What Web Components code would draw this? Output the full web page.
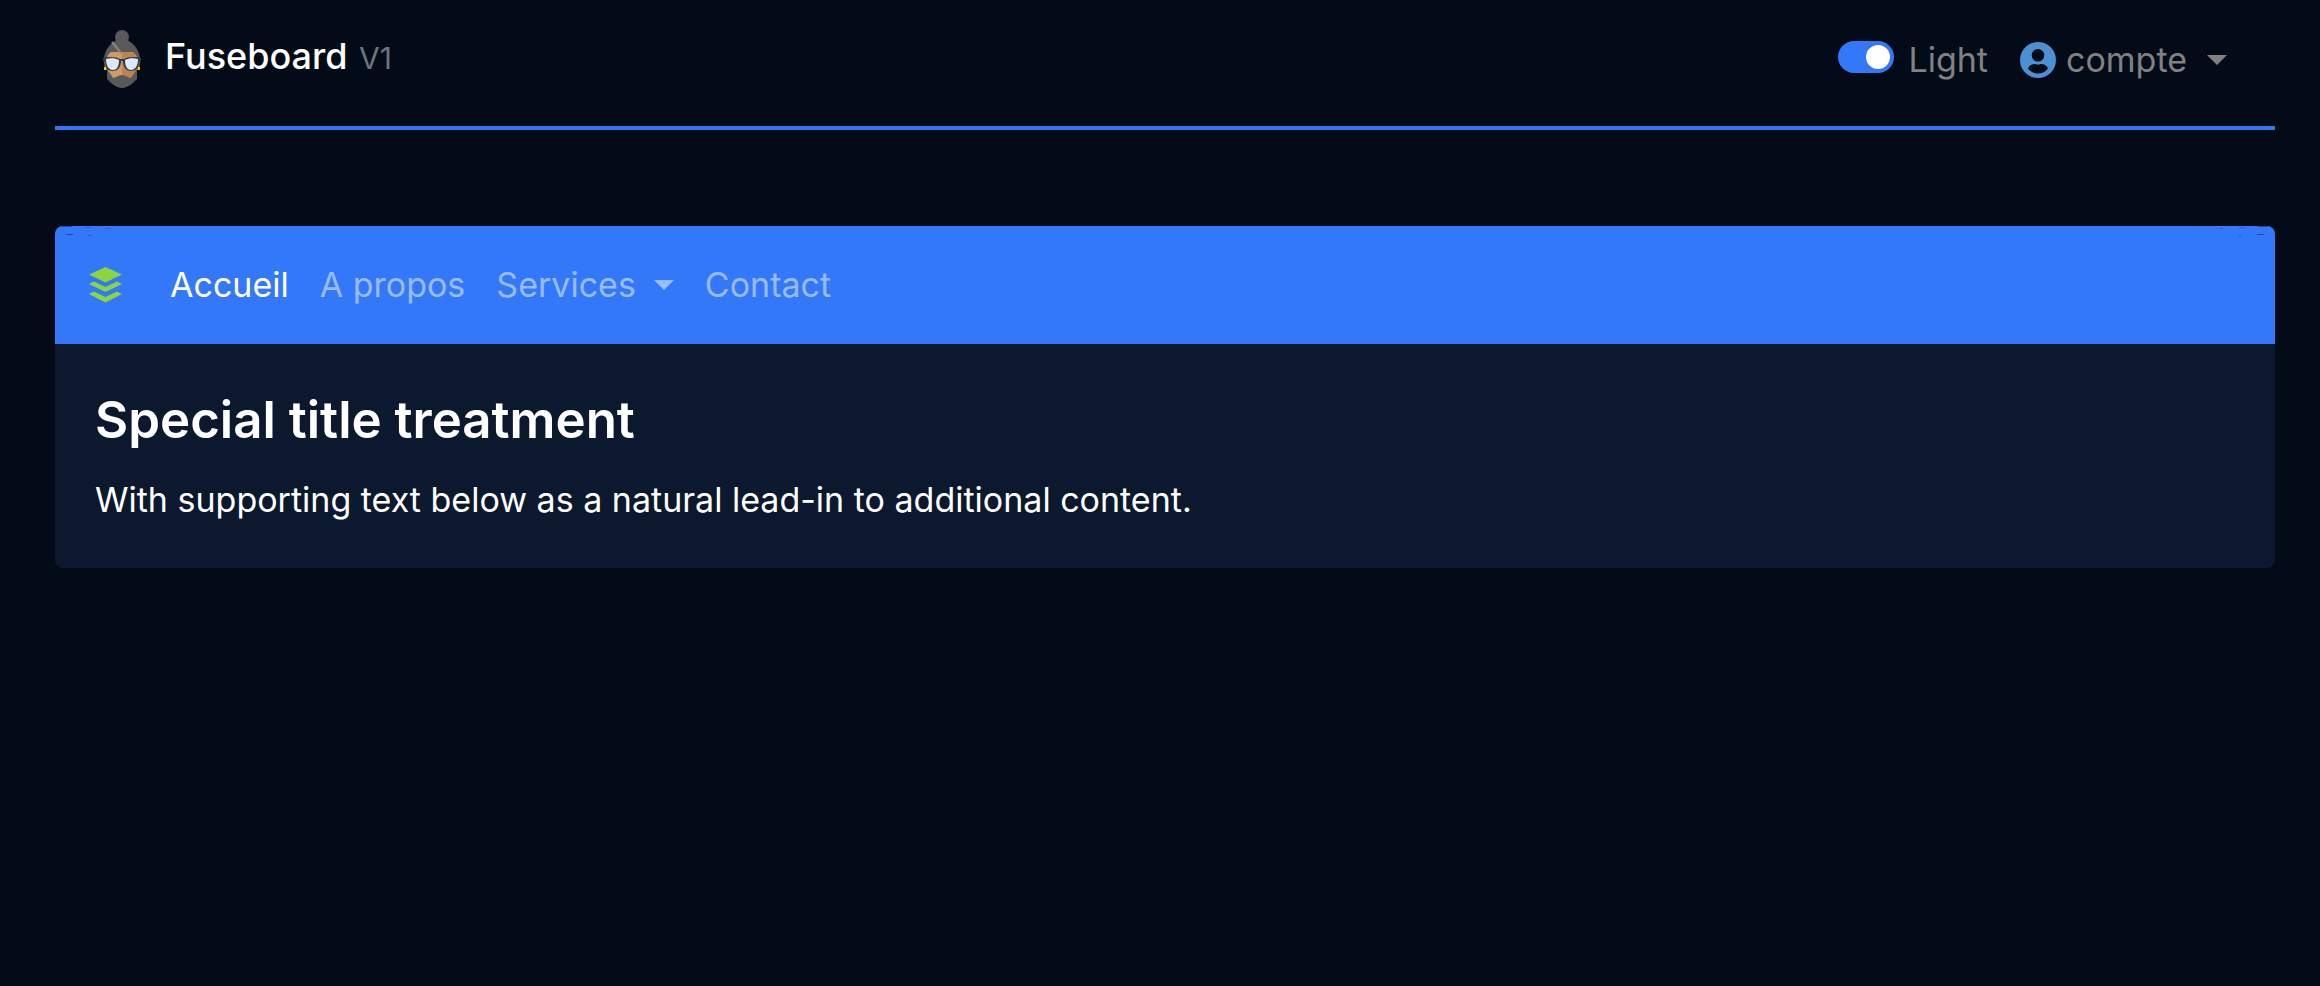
<!DOCTYPE html>
<html lang="fr">
<head>
<meta charset="utf-8">
<meta name="viewport" content="width=device-width, initial-scale=1">
<title>Fuseboard</title>
<style>
  body {
    --blue: #3378f8;
    --panel: #0c182e;
    --muted: #818181;
    margin: 0;
    min-height: 100vh;
    background: #040b18;
    color: #fff;
    font-family: Inter, "Noto Sans", sans-serif;
    font-size: 34px;
    line-height: 52px;
  }
</style>
</head>
<body>
<fuse-page>
  <fuse-header slot="header">
    <fuse-brand version="V1">Fuseboard</fuse-brand>
    <fuse-switch slot="tools">Light</fuse-switch>
    <fuse-account slot="tools">compte</fuse-account>
  </fuse-header>
  <fuse-card>
    <fuse-nav slot="nav">
      <fuse-nav-link active>Accueil</fuse-nav-link>
      <fuse-nav-link>A propos</fuse-nav-link>
      <fuse-nav-link menu>Services</fuse-nav-link>
      <fuse-nav-link>Contact</fuse-nav-link>
    </fuse-nav>
    <span slot="title">Special title treatment</span>
    With supporting text below as a natural lead-in to additional content.
  </fuse-card>
</fuse-page>

<script>
const caret = '<svg class="caret" width="20" height="10" viewBox="0 0 20 10" aria-hidden="true"><path d="M0 0h20L10 10z" fill="currentColor"/></svg>';

function define(name, html) {
  customElements.define(name, class extends HTMLElement {
    constructor() {
      super();
      this.attachShadow({ mode: 'open' }).innerHTML =
        typeof html === 'function' ? html(this) : html;
    }
  });
}

define('fuse-page', `
  <style>
    :host { display: flex; flex-direction: column; gap: 96px; padding: 0 45px 48px 55px; }
  </style>
  <slot name="header"></slot>
  <main><slot></slot></main>`);

define('fuse-header', `
  <style>
    :host { display: block; }
    header { display: flex; justify-content: space-between; align-items: flex-start;
      padding: 28px 48px 38px; border-bottom: 4px solid var(--blue); }
    .tools { display: flex; align-items: center; gap: 32px; padding-top: 6px; }
  </style>
  <header>
    <slot></slot>
    <div class="tools"><slot name="tools"></slot></div>
  </header>`);

define('fuse-brand', el => `
  <style>
    :host { display: block; }
    a { display: flex; align-items: flex-start; gap: 24px; color: #fff; text-decoration: none; }
    svg { flex: none; margin-top: 2px; }
    .name { font-size: 36px; font-weight: 500; line-height: 56px; }
    small { font-size: 30px; font-weight: 400; color: #6c757d; margin-left: 2px; }
  </style>
  <a href="#">
    <svg width="38" height="58" viewBox="0 0 38 58" aria-hidden="true">
      <path d="M1 29h3v11H2zM34 29h3l-1 11h-2z" fill="#b98043"/>
      <path d="M1 37h2v3H1zM35 37h2v3h-2z" fill="#e9cf24"/>
      <path d="M4 20h15v36L5 44z" fill="#d39b64"/>
      <path d="M19 20h15v24L19 56z" fill="#b98552"/>
      <path d="M19 0a7 7 0 0 1 6 10.500C32 14 37 22 37 30h-2c0-3-2-6-5-8H8c-3 2-5 5-5 8H1c0-8 5-16 12-19.500A7 7 0 0 1 19 0z" fill="#595959"/>
      <path d="M9 12l9 11" stroke="#858585" stroke-width="2"/>
      <path d="M4 39l6 9c3 0 5-3 9-3s6 3 9 3l6-9v10c-3 3-9 9-15 9S7 52 4 49z" fill="#595959"/>
      <path d="M0 28c6-2 14-1 17 1h4c3-2 11-3 17-1v3l-2 1c0 6-3 9-8 9s-8-4-8-10h-2c0 6-3 10-8 10s-8-3-8-9l-2-1z" fill="#373b40"/>
      <path d="M3 29c4-1 9-1 13 1 0 6-2 10-6 10s-7-4-7-11zM35 29c-4-1-9-1-13 1 0 6 2 10 6 10s7-4 7-11z" fill="#dce9fd"/>
    </svg>
    <span class="name"><slot></slot> <small>${el.getAttribute('version') || ''}</small></span>
  </a>`);

define('fuse-switch', `
  <style>
    :host { display: block; color: var(--muted); }
    label { display: flex; align-items: flex-start; gap: 14px; cursor: pointer; }
    input { appearance: none; flex: none; width: 56px; height: 32px; margin: 7px 0 0; padding: 4px;
      border-radius: 16px; background: #495057; display: flex; box-sizing: border-box; cursor: pointer; }
    input::before { content: ""; width: 24px; height: 24px; border-radius: 50%; background: #fff; }
    input:checked { background: var(--blue); justify-content: flex-end; }
  </style>
  <label><input type="checkbox" role="switch" checked><span><slot></slot></span></label>`);

define('fuse-account', `
  <style>
    :host { display: block; color: var(--muted); }
    button { display: flex; align-items: center; padding: 0; border: 0; background: none;
      color: inherit; font: inherit; cursor: pointer; }
    .icon { margin-right: 10px; }
    .caret { margin-left: 20px; }
  </style>
  <button type="button" aria-haspopup="true">
    <svg class="icon" width="36" height="36" viewBox="0 0 36 36" aria-hidden="true">
      <path fill-rule="evenodd" fill="#4a90d3" d="M18 0a18 18 0 1 1 0 36 18 18 0 0 1 0-36zM18 7a6.300 6.300 0 1 0 0 12.600A6.300 6.300 0 0 0 18 7zM8 26.500c2 3 6 5 10 5s8-2 10-5c-1-3-4-4.500-6.500-4.500-1 0-2 .7-3.500.7s-2.500-.7-3.500-.7C12 22 9 23.500 8 26.500z"/>
    </svg>
    <slot></slot>${caret}
  </button>`);

define('fuse-card', `
  <style>
    :host { display: block; border-radius: 8px; overflow: hidden; background: var(--panel); }
    .body { padding: 42px 40px; }
    h5 { margin: 0 0 20px; font-size: 51px; font-weight: 600; line-height: 68px; }
    p { margin: 0; }
  </style>
  <slot name="nav"></slot>
  <div class="body">
    <h5><slot name="title"></slot></h5>
    <p><slot></slot></p>
  </div>`);

define('fuse-nav', `
  <style>
    :host { display: block; position: relative; background: var(--blue); }
    nav { display: flex; align-items: center; padding: 33px 34px; }
    .logo { display: flex; margin-right: 48px; }
    .links { display: flex; gap: 31px; }
    .edge { position: absolute; top: 0; left: 0; }
    .edge.right { left: auto; right: 0; transform: scaleX(-1); }
  </style>
  ${['edge', 'edge right'].map(c => `<svg class="${c}" width="60" height="12" viewBox="0 0 60 12" aria-hidden="true">
    <path d="M7 0h10v1H7zM11 8h7v1h-7z" fill="#1d4999"/>
    <path d="M30 1h6v1h-6zM33 9h4v1h-4zM52 2h3v1h-3z" fill="#2860c9"/>
  </svg>`).join('')}
  <nav>
    <a class="logo" href="#" aria-label="Fuseboard">
      <svg width="33" height="36" viewBox="0 0 33 36" fill="#8dd53f" aria-hidden="true">
        <path d="M16.500 0L33 7.500l-16.500 8L0 7.500z"/>
        <path d="M0 17l5-2.500 11.500 5.500L28 14.500l5 2.500-16.500 8z"/>
        <path d="M0 27l5-2.500L16.500 30 28 24.500l5 2.500-16.500 8.500z"/>
      </svg>
    </a>
    <div class="links"><slot></slot></div>
  </nav>`);

define('fuse-nav-link', el => `
  <style>
    :host { display: block; }
    a { display: flex; align-items: center; color: rgba(255, 255, 255, .5); text-decoration: none; }
    :host([active]) a { color: #fff; }
    .caret { margin-left: 18px; }
  </style>
  <a href="#"><slot></slot>${el.hasAttribute('menu') ? caret : ''}</a>`);
</script>
</body>
</html>
